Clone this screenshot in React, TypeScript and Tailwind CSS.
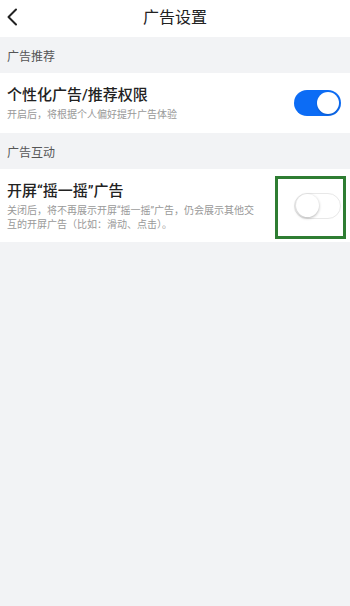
import React from "react";

const font = { fontFamily: 'Roboto, "Noto Sans CJK SC", "Noto Sans", sans-serif' };

function Toggle({ on }: { on: boolean }) {
  return on ? (
    <div className="w-[47px] h-[26px] rounded-full bg-[#0c6cf5] flex items-center justify-end px-[2px] shrink-0">
      <div className="w-[22px] h-[22px] rounded-full bg-white shadow-[0_1px_2px_rgba(0,0,0,0.2)]" />
    </div>
  ) : (
    <div className="w-[47px] h-[26px] rounded-full bg-white border border-[#e8e8e8] flex items-center justify-start px-[1px] shrink-0">
      <div className="w-[23px] h-[23px] rounded-full bg-white shadow-[0_1px_3px_rgba(0,0,0,0.3)]" />
    </div>
  );
}

export default function App() {
  return (
    <div className="w-[350px] h-[606px] bg-[#f2f3f5] flex flex-col" style={font}>
      <div className="relative h-[37px] bg-white flex items-center justify-center">
        <svg className="absolute left-[6px] top-[8px]" width="12" height="18" viewBox="0 0 12 18">
          <path d="M10 1.5 L2.5 9 L10 16.5" fill="none" stroke="#222" strokeWidth="2" strokeLinecap="round" strokeLinejoin="round" />
        </svg>
        <span className="text-[16px] text-[#222] leading-none mt-[-2px]">广告设置</span>
      </div>
      <div className="h-[36px] flex items-center pl-[7px] pt-[3px] text-[12px] text-[#555]">广告推荐</div>
      <div className="h-[60px] bg-white flex items-center pl-[7px] pr-[9px]">
        <div className="flex-1 flex flex-col">
          <span className="text-[15px] font-medium text-[#222] leading-[20px]">个性化广告/推荐权限</span>
          <span className="text-[10px] text-[#999] leading-[14px] mt-[3px]">开启后，将根据个人偏好提升广告体验</span>
        </div>
        <Toggle on={true} />
      </div>
      <div className="h-[36px] flex items-center pl-[7px] pt-[3px] text-[12px] text-[#555]">广告互动</div>
      <div className="relative h-[73px] bg-white flex items-center pl-[7px] pr-[9px]">
        <div className="flex-1 flex flex-col pr-[36px]">
          <span className="text-[15px] font-medium text-[#222] leading-[20px] mt-[2px]">开屏“摇一摇”广告</span>
          <span className="text-[10px] text-[#999] leading-[14px] mt-[3px]">关闭后，将不再展示开屏“摇一摇”广告，仍会展示其他交互的开屏广告（比如：滑动、点击）。</span>
        </div>
        <Toggle on={false} />
        <div className="absolute left-[275px] top-[7px] w-[71px] h-[63px] border-[3px] border-[#2e7d32]" />
      </div>
    </div>
  );
}
